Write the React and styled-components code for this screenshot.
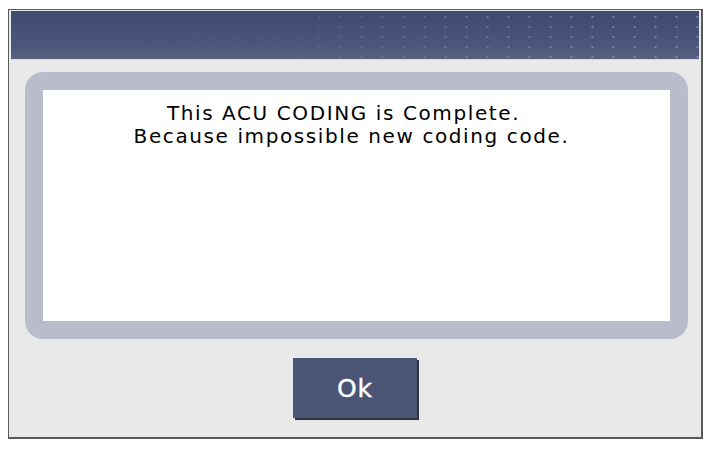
import React from "react";
import styled, { createGlobalStyle } from "styled-components";

const Global = createGlobalStyle`
  html, body { margin: 0; padding: 0; background: #ffffff; }
  body { width: 711px; height: 449px; overflow: hidden; }
`;

const Frame = styled.div`
  box-sizing: border-box;
  margin: 9px 0 0 8px;
  width: 695px;
  height: 430px;
  border: 1px solid #5a5a5a;
  border-right-width: 2px;
  border-bottom-width: 2px;
  background: #e9e9e9;
  padding: 1px 2px 0 2px;
  display: flex;
  flex-direction: column;
  align-items: center;
`;

const Header = styled.div`
  position: relative;
  align-self: stretch;
  height: 48px;
  background: linear-gradient(#3f4b6e, #4a567a 70%, #56617f);
  border-bottom: 1px solid #d8dae0;
  overflow: hidden;
`;

const Dots = styled.div`
  position: absolute;
  inset: 0;
  background-image: radial-gradient(circle, rgba(140, 160, 190, 0.6) 0.9px, transparent 1.4px);
  background-size: 21px 10px;
  background-position: 4px 1px;
  -webkit-mask-image: linear-gradient(to right, transparent 15%, rgba(0,0,0,0.3) 45%, #000 85%);
  mask-image: linear-gradient(to right, transparent 15%, rgba(0,0,0,0.3) 45%, #000 85%);
`;

const MessageBox = styled.div`
  box-sizing: border-box;
  margin-top: 12px;
  margin-left: 2px;
  width: 663px;
  height: 267px;
  border: 18px solid #b8bccb;
  border-radius: 18px;
  background: #ffffff;
  display: flex;
  flex-direction: column;
  align-items: center;
  padding-top: 12px;
`;

const Line = styled.div`
  font-family: "DejaVu Sans", sans-serif;
  font-size: 20px;
  line-height: 23px;
  letter-spacing: 1.6px;
  color: #000;
  white-space: nowrap;
  padding-right: ${(p) => p.$trail || 0}px;
`;

const OkButton = styled.button`
  margin-top: 19px;
  width: 124px;
  height: 60px;
  border: none;
  padding: 0;
  background: #4a5576;
  box-shadow: 2px 2px 0 #2e3342;
  color: #ffffff;
  font-family: "DejaVu Sans", sans-serif;
  font-size: 25px;
  letter-spacing: 1px;
  -webkit-text-stroke: 0.4px #ffffff;
  cursor: pointer;
`;

export default function App() {
  return (
    <>
      <Global />
      <Frame>
        <Header>
          <Dots />
        </Header>
        <MessageBox>
          <Line $trail={25}>This ACU CODING is Complete.</Line>
          <Line $trail={9}>Because impossible new coding code.</Line>
        </MessageBox>
        <OkButton>Ok</OkButton>
      </Frame>
    </>
  );
}
